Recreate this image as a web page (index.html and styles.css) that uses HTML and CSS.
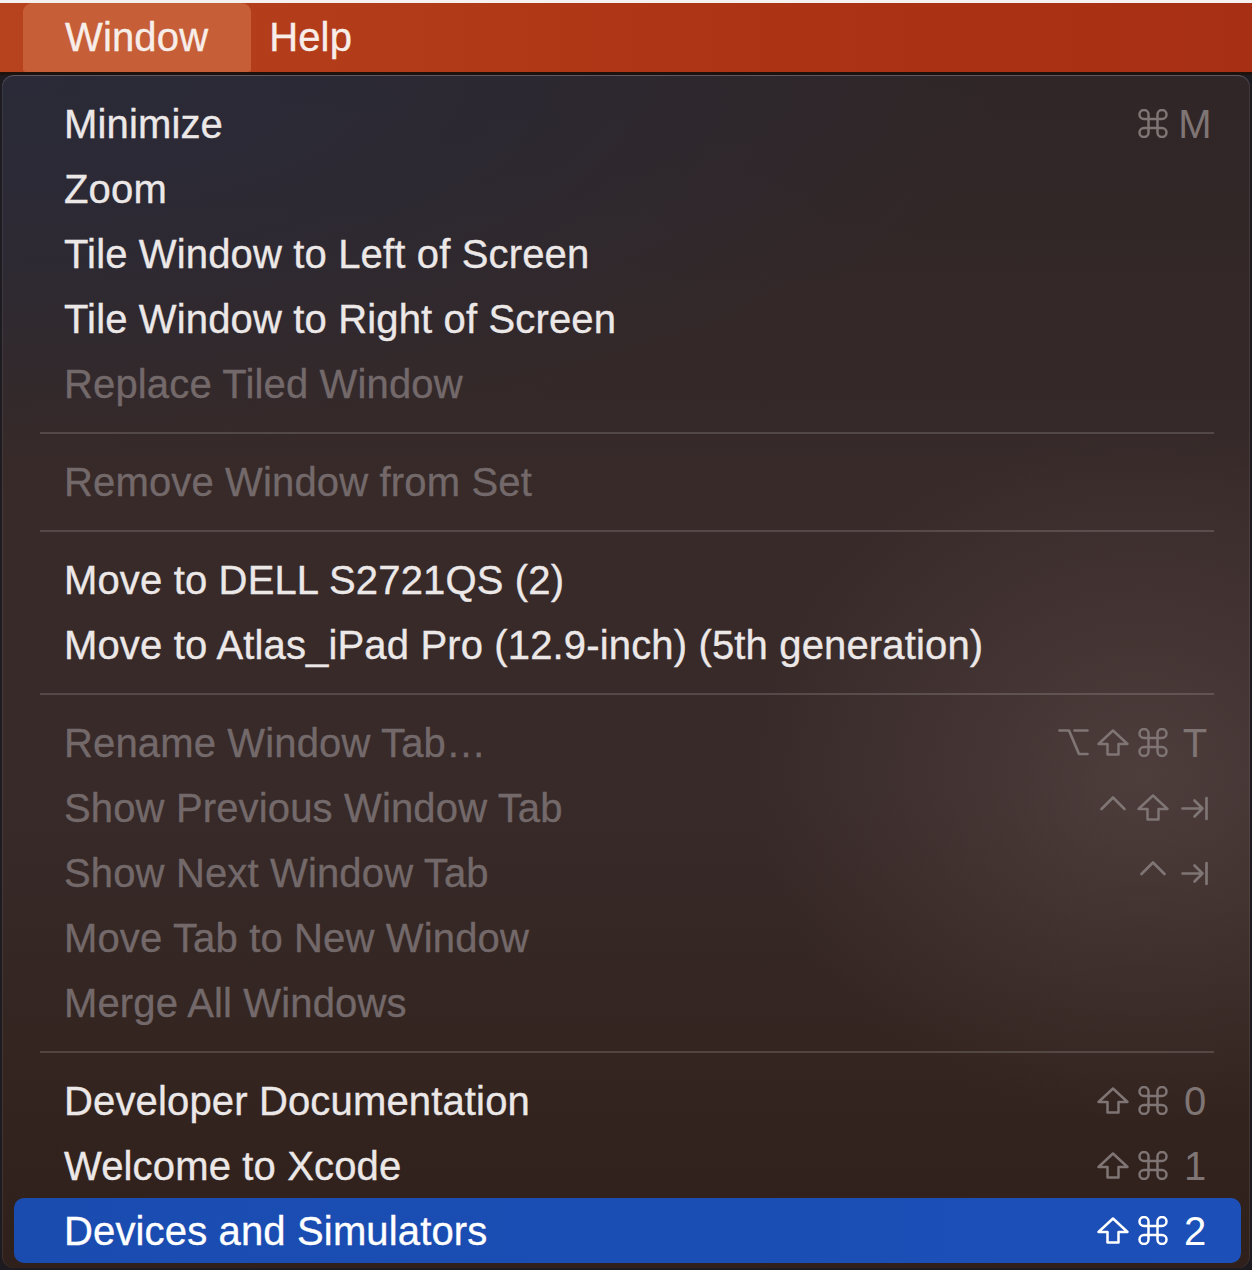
FILE: index.html
```html
<!DOCTYPE html>
<html lang="en">
<head>
<meta charset="utf-8">
<title>Window menu</title>
<link rel="stylesheet" href="styles.css">
</head>
<body>
<svg class="defs" width="0" height="0" aria-hidden="true">
  <defs>
    <symbol id="cmd" viewBox="0 0 30 29">
      <path d="M10.5 10 V5.5 A4.5 4.5 0 1 0 6 10 H24 A4.5 4.5 0 1 0 19.5 5.5 V23.5 A4.5 4.5 0 1 0 24 19 H6 A4.5 4.5 0 1 0 10.5 23.5 Z" fill="none" stroke="currentColor" stroke-width="2.5" stroke-linejoin="round"/>
    </symbol>
    <symbol id="shift" viewBox="0 0 34 29">
      <path d="M17 2.5 L31.5 16 H22.5 V26.5 H11.5 V16 H2.5 Z" fill="none" stroke="currentColor" stroke-width="2.5" stroke-linejoin="round"/>
    </symbol>
    <symbol id="opt" viewBox="0 0 31 29">
      <path d="M1.5 2.5 H11 L21 26 H29.5 M16.5 2.5 H29.5" fill="none" stroke="currentColor" stroke-width="2.7" stroke-linecap="round" stroke-linejoin="round"/>
    </symbol>
    <symbol id="ctrl" viewBox="0 0 28 29">
      <path d="M2.5 16 L14 4.5 L25.5 16" fill="none" stroke="currentColor" stroke-width="2.7" stroke-linecap="round" stroke-linejoin="round"/>
    </symbol>
    <symbol id="tab" viewBox="0 0 28 29">
      <path d="M1.5 14.5 H21.5 M13.5 6.5 L21.5 14.5 L13.5 22.5 M25.5 4 V25" fill="none" stroke="currentColor" stroke-width="2.7" stroke-linecap="round" stroke-linejoin="round"/>
    </symbol>
  </defs>
</svg>

<div class="screen">
  <div class="topline"></div>
  <div class="menubar">
    <div class="mb-item mb-active">Window</div>
    <div class="mb-item mb-help">Help</div>
  </div>
  <div class="desktop">
    <div class="menu">
      <div class="row">
        <span class="label">Minimize</span>
        <span class="keys">
          <span class="k"><svg class="g g-cmd"><use href="#cmd"/></svg></span>
          <span class="k key">M</span>
        </span>
      </div>
      <div class="row"><span class="label">Zoom</span></div>
      <div class="row"><span class="label">Tile Window to Left of Screen</span></div>
      <div class="row"><span class="label">Tile Window to Right of Screen</span></div>
      <div class="row disabled"><span class="label">Replace Tiled Window</span></div>

      <div class="sep"></div>

      <div class="row disabled"><span class="label">Remove Window from Set</span></div>

      <div class="sep"></div>

      <div class="row"><span class="label">Move to DELL S2721QS (2)</span></div>
      <div class="row"><span class="label">Move to Atlas_iPad Pro (12.9-inch) (5th generation)</span></div>

      <div class="sep"></div>

      <div class="row disabled">
        <span class="label">Rename Window Tab…</span>
        <span class="keys">
          <span class="k"><svg class="g g-opt"><use href="#opt"/></svg></span>
          <span class="k"><svg class="g g-shift"><use href="#shift"/></svg></span>
          <span class="k"><svg class="g g-cmd"><use href="#cmd"/></svg></span>
          <span class="k key">T</span>
        </span>
      </div>
      <div class="row disabled">
        <span class="label">Show Previous Window Tab</span>
        <span class="keys">
          <span class="k"><svg class="g g-ctrl"><use href="#ctrl"/></svg></span>
          <span class="k"><svg class="g g-shift"><use href="#shift"/></svg></span>
          <span class="k key"><svg class="g g-tab"><use href="#tab"/></svg></span>
        </span>
      </div>
      <div class="row disabled">
        <span class="label">Show Next Window Tab</span>
        <span class="keys">
          <span class="k"><svg class="g g-ctrl"><use href="#ctrl"/></svg></span>
          <span class="k key"><svg class="g g-tab"><use href="#tab"/></svg></span>
        </span>
      </div>
      <div class="row disabled"><span class="label">Move Tab to New Window</span></div>
      <div class="row disabled"><span class="label">Merge All Windows</span></div>

      <div class="sep"></div>

      <div class="row">
        <span class="label">Developer Documentation</span>
        <span class="keys">
          <span class="k"><svg class="g g-shift"><use href="#shift"/></svg></span>
          <span class="k"><svg class="g g-cmd"><use href="#cmd"/></svg></span>
          <span class="k key">0</span>
        </span>
      </div>
      <div class="row">
        <span class="label">Welcome to Xcode</span>
        <span class="keys">
          <span class="k"><svg class="g g-shift"><use href="#shift"/></svg></span>
          <span class="k"><svg class="g g-cmd"><use href="#cmd"/></svg></span>
          <span class="k key">1</span>
        </span>
      </div>
      <div class="row selected">
        <span class="label">Devices and Simulators</span>
        <span class="keys">
          <span class="k"><svg class="g g-shift"><use href="#shift"/></svg></span>
          <span class="k"><svg class="g g-cmd"><use href="#cmd"/></svg></span>
          <span class="k key">2</span>
        </span>
      </div>
    </div>
  </div>
</div>
</body>
</html>
```

FILE: styles.css
```css
html, body {
  margin: 0;
  padding: 0;
}

body {
  background: #1d1a1f;
  font-family: "Liberation Sans", Arial, sans-serif;
  width: 1252px;
  height: 1270px;
  overflow: hidden;
}

.defs {
  position: absolute;
  width: 0;
  height: 0;
  overflow: hidden;
}

.screen {
  display: flex;
  flex-direction: column;
  height: 1270px;
}

.topline {
  height: 3px;
  background: #f4f1f0;
}

.menubar {
  height: 70px;
  display: flex;
  align-items: stretch;
  padding-left: 23px;
  background: linear-gradient(90deg, #b7431e 0%, #b13a18 35%, #ab3214 70%, #a72f13 100%);
  border-bottom: 3px solid #1f110c;
}

.mb-item {
  display: flex;
  align-items: center;
  font-size: 40px;
  color: #f8eee9;
  letter-spacing: 0.15px;
  -webkit-text-stroke: 0.35px currentColor;
}

.mb-active {
  padding: 0 43px 0 42px;
  background: #c65e37;
  border-radius: 9px 9px 3px 3px;
}

.mb-help {
  padding-left: 18px;
}

.desktop {
  flex: 1;
  padding: 0 2px 2px 2px;
  background: #1d1a20;
  display: flex;
}

.menu {
  flex: 1;
  display: flex;
  flex-direction: column;
  padding: 15px 9px 5px 12px;
  border-radius: 12px;
  border-top: 1px solid #5a5865;
  box-shadow: inset 1px 0 0 rgba(255, 255, 255, 0.08), inset -1px 0 0 rgba(255, 255, 255, 0.08);
  background:
    radial-gradient(ellipse 520px 460px at 1140px 700px, rgba(95, 76, 74, 0.55), rgba(95, 76, 74, 0) 75%),
    radial-gradient(ellipse 1000px 380px at 0 0, #2a2a38 0%, rgba(42, 42, 56, 0.75) 40%, rgba(42, 42, 56, 0) 100%),
    linear-gradient(180deg, #302627 0%, #372a29 35%, #372a29 60%, #33241f 85%, #2f201c 100%);
}

.row {
  height: 65px;
  flex: none;
  display: flex;
  align-items: center;
  justify-content: space-between;
  padding: 0 24px 0 50px;
  font-size: 40px;
  color: #ece8e8;
  border-radius: 10px;
}

.label {
  white-space: nowrap;
  line-height: 65px;
  padding-top: 2px;
  letter-spacing: 0.15px;
  -webkit-text-stroke: 0.35px currentColor;
}

.row.disabled {
  color: #73696a;
}

.keys {
  display: flex;
  align-items: center;
  color: #7f7574;
}

.k {
  width: 40px;
  height: 65px;
  display: flex;
  align-items: center;
  justify-content: center;
}

.k.key {
  width: 44px;
  line-height: 65px;
  padding-top: 2px;
  box-sizing: border-box;
}

.g {
  display: block;
  height: 29px;
}

.g-cmd { width: 30px; }
.g-shift { width: 34px; }
.g-opt { width: 31px; }
.g-ctrl { width: 28px; }
.g-tab { width: 28px; }

.sep {
  height: 33px;
  flex: none;
  display: flex;
  align-items: center;
  padding: 0 27px 0 26px;
}

.sep::before {
  content: "";
  display: block;
  flex: 1;
  height: 2px;
  background: rgba(255, 255, 255, 0.15);
}

.row.selected {
  background: linear-gradient(90deg, #1a4cb0 0%, #1b4eb5 60%, #1c50b8 100%);
  color: #ffffff;
}

.row.selected .keys {
  color: #ffffff;
}
```
